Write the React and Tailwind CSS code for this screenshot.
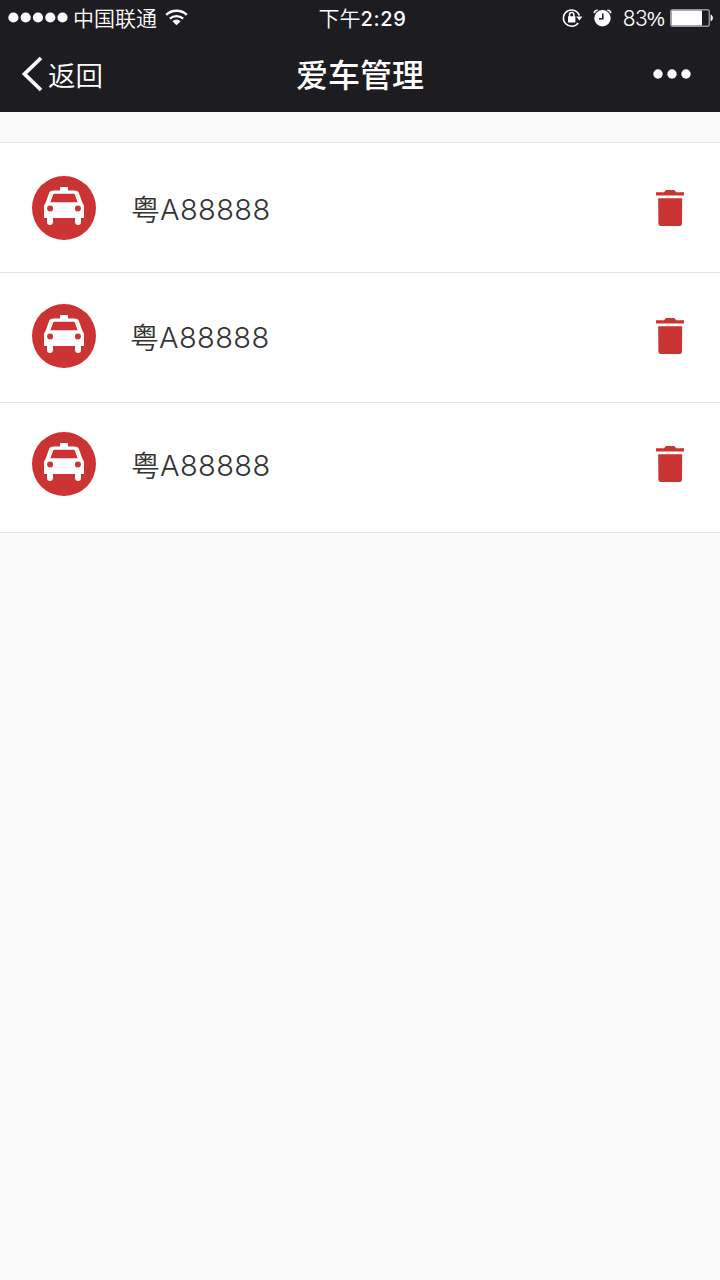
const cars = [
  { region: '粤', number: 'A88888', pad: 'pt-[33px]', text: 'ml-[35px]' },
  { region: '粤', number: 'A88888', pad: 'pt-[31px]', text: 'ml-[34px]' },
  { region: '粤', number: 'A88888', pad: 'pt-[29px]', text: 'ml-[35px]' },
];

function Wifi() {
  return (
    <svg className="mt-[9px] ml-2 h-[17px] w-[23px] shrink-0" viewBox="0 0 23 17" fill="none" stroke="#fff" strokeWidth="2.4">
      <path d="M1.2 5.9a15 15 0 0 1 20.6 0" />
      <path d="M4.9 9.7a9.7 9.7 0 0 1 13.2 0" />
      <path d="M7.4 12.2a6 6 0 0 1 8.2 0L11.5 16.2Z" fill="#fff" stroke="none" />
    </svg>
  );
}

function RotationLock() {
  return (
    <svg className="h-[20px] w-[21px]" viewBox="0 0 21 20" fill="none" stroke="#fff" strokeWidth="1.5">
      <path d="M17.4 7.6A8.2 8.2 0 1 0 16.2 15" />
      <path d="M14.2 8.4h6.2l-3.1 4Z" fill="#fff" stroke="none" />
      <rect x="6" y="8.2" width="7.4" height="6.2" rx="0.6" fill="#fff" stroke="none" />
      <path d="M7.5 9V6.8a2.2 2.2 0 0 1 4.4 0V9" />
    </svg>
  );
}

function Alarm() {
  return (
    <svg className="h-[18px] w-[19px]" viewBox="0 0 19 18">
      <circle cx="9.5" cy="9.3" r="8.2" fill="#fff" />
      <path d="M1.3 4.2C1.4 2.4 2.8 1.2 4.7 1.3M17.7 4.2c-.1-1.8-1.5-3-3.4-2.9" fill="none" stroke="#fff" strokeWidth="1.6" />
      <path d="M9.8 4.6v5.2H6" fill="none" stroke="#1d1c21" strokeWidth="1.5" />
    </svg>
  );
}

function Battery() {
  return (
    <svg className="h-[18px] w-[44px]" viewBox="0 0 44 18">
      <rect x="0.7" y="0.7" width="38.6" height="16.6" rx="2" fill="none" stroke="#96959a" strokeWidth="1.4" />
      <rect x="1.5" y="1.5" width="30.5" height="15" rx="0.8" fill="#fff" />
      <path d="M40.6 5.6c3 1.2 3 5.6 0 6.8Z" fill="#fff" />
    </svg>
  );
}

function Taxi() {
  return (
    <svg className="h-16 w-16 shrink-0" viewBox="0 0 64 64">
      <circle cx="32" cy="32" r="32" fill="#cc3333" />
      <path fill="#fff" d="M28 11h8v3.6h6.5c2.6 0 4 1 4.7 3.1L50.3 26.5 52 29.5V42h-3V46a3 3 0 0 1-6 0v-4H21V46a3 3 0 0 1-6 0v-4h-3V29.5L13.7 26.5l3.1-8.8C17.5 15.6 19 14.6 21.5 14.6H28Z" />
      <path fill="#cc3333" d="M22.8 17.8h18.4c1 0 1.6.5 1.9 1.5l2.5 6.9H18.4l2.5-6.9c.3-1 .9-1.5 1.9-1.5Z" />
      <circle cx="18.1" cy="32.4" r="3" fill="#cc3333" />
      <circle cx="45.9" cy="32.4" r="3" fill="#cc3333" />
    </svg>
  );
}

function Trash() {
  return (
    <svg className="mt-[14px] mr-9 ml-auto h-9 w-7 shrink-0" viewBox="0 0 28 36" fill="#cc3333">
      <path d="M9.8 0h8.6l1.8 2.2H28V5.6H0V2.2h8Z" />
      <path d="M2.2 8.2h24l-.2 25.4c0 1.5-.9 2.4-2.3 2.4H4.7c-1.4 0-2.3-.9-2.3-2.4Z" />
    </svg>
  );
}

export default function App() {
  return (
    <div className="min-h-screen bg-[#fafafa] font-[Inter,'Noto_Sans_CJK_SC',sans-serif]">
      <header className="h-28 bg-[#1d1c21] text-white">
        <div className="grid h-9 grid-cols-[270px_185px_1fr]">
          <div className="flex items-start pl-[8px]">
            <svg className="mt-[12px] h-[11px] w-[60px]" viewBox="0 0 60 11" fill="#fff">
              <circle cx="5.4" cy="5.5" r="5.1" />
              <circle cx="17.7" cy="5.5" r="5.1" />
              <circle cx="30" cy="5.5" r="5.1" />
              <circle cx="42.3" cy="5.5" r="5.1" />
              <circle cx="54.5" cy="5.5" r="5.1" />
            </svg>
            <span className="-mt-px ml-[5px] font-['Noto_Sans_CJK_SC',sans-serif] text-[21px] leading-9 font-[350]">中国联通</span>
            <Wifi />
          </div>
          <div className="flex justify-center text-[20px] leading-9 font-medium tracking-[0.7px]">
            <span className="mt-px text-[21px] font-[350] tracking-normal">下午</span>
            <span className="mt-px">2:29</span>
          </div>
          <div className="flex h-9 items-center justify-end pr-[6px]">
            <RotationLock />
            <span className="ml-[10px] flex"><Alarm /></span>
            <span className="ml-[11px] h-9 pt-px text-[21px] leading-9 font-light tracking-[-0.7px]">
              83<span className="inline-block w-[17px] font-['Liberation_Sans',sans-serif] text-[20px] tracking-normal">%</span>
            </span>
            <span className="ml-[6px] flex"><Battery /></span>
          </div>
        </div>
        <nav className="grid h-19 grid-cols-[200px_1fr_200px] items-center">
          <div className="flex items-center pl-[21px]">
            <svg className="h-[36px] w-[22px]" viewBox="0 0 22 36" fill="none" stroke="#fff" strokeWidth="3.8">
              <path d="M20 2 3.5 18 20 34" />
            </svg>
            <span className="mt-[3px] ml-[5px] text-[27.5px] leading-9 font-[350]">返回</span>
          </div>
          <h1 className="mt-[3px] text-center text-[32px] leading-10 font-medium">爱车管理</h1>
          <svg className="mr-[29px] h-[10px] w-[38px] justify-self-end" viewBox="0 0 38 10" fill="#fff">
            <circle cx="5" cy="5" r="4.7" />
            <circle cx="19" cy="5" r="4.7" />
            <circle cx="33" cy="5" r="4.7" />
          </svg>
        </nav>
      </header>
      <ul className="mt-[30px] border-t border-[#e5e5e5]">
        {cars.map((car, i) => (
          <li key={i} className={`flex h-[130px] items-start border-b border-[#e5e5e5] bg-white pl-8 ${car.pad}`}>
            <Taxi />
            <div className={`${car.text} mt-[2px] flex text-[29px] leading-16 text-[#333]`}>
              <span className="mt-px font-[350]">{car.region}</span>
              <span className="font-light tracking-[0.4px]">{car.number}</span>
            </div>
            <Trash />
          </li>
        ))}
      </ul>
    </div>
  );
}
